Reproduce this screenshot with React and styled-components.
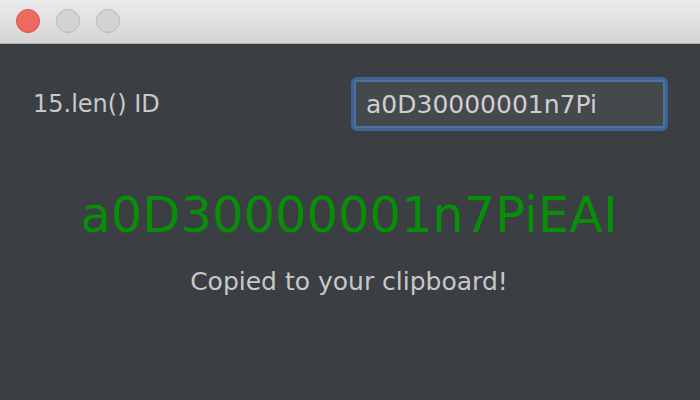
import React from 'react';
import styled, { createGlobalStyle } from 'styled-components';

const GlobalStyle = createGlobalStyle`
  html, body {
    margin: 0;
    padding: 0;
    background: #3b3e42;
  }
  body {
    font-family: "DejaVu Sans", "Liberation Sans", sans-serif;
  }
`;

const Window = styled.div`
  width: 700px;
  height: 400px;
  display: flex;
  flex-direction: column;
  background: #3b3e42;
  overflow: hidden;
`;

const TitleBar = styled.div`
  height: 44px;
  flex-shrink: 0;
  display: flex;
  align-items: center;
  gap: 16px;
  padding: 0 0 1px 16px;
  background: linear-gradient(#ebebeb, #d5d5d5);
  border-bottom: 1px solid #b0b0b0;
  box-sizing: border-box;
`;

const Light = styled.div`
  width: 24px;
  height: 24px;
  border-radius: 50%;
  box-sizing: border-box;
  background: ${(props) => props.color};
  border: 1px solid ${(props) => props.edge};
`;

const Content = styled.div`
  flex: 1;
  display: flex;
  flex-direction: column;
  padding: 36px 35px 0 33px;
`;

const FieldRow = styled.div`
  display: flex;
  align-items: center;
  justify-content: space-between;
`;

const Label = styled.div`
  color: #c9c9c9;
  font-size: 24px;
  line-height: 28px;
`;

const IdInput = styled.input`
  width: 311px;
  height: 48px;
  box-sizing: border-box;
  border: 2px solid #4b72a3;
  border-radius: 3px;
  box-shadow: 0 0 0 3px #3e6493;
  background: #45494c;
  color: #cfcfcf;
  font-family: inherit;
  font-size: 25px;
  padding: 0 0 0 10px;
  outline: none;
`;

const Result = styled.div`
  margin-top: 59px;
  text-align: center;
  color: #088e08;
  font-size: 49.5px;
  line-height: 56px;
  white-space: nowrap;
`;

const Note = styled.div`
  margin-top: 24px;
  text-align: center;
  color: #c8c8c8;
  font-size: 25px;
  line-height: 29px;
`;

export default function App() {
  return (
    <Window>
      <GlobalStyle />
      <TitleBar>
        <Light color="#ee6a5e" edge="#d5554b" />
        <Light color="#d3d3d3" edge="#b9b9b9" />
        <Light color="#d3d3d3" edge="#b9b9b9" />
      </TitleBar>
      <Content>
        <FieldRow>
          <Label>15.len() ID</Label>
          <IdInput defaultValue="a0D30000001n7Pi" />
        </FieldRow>
        <Result>a0D30000001n7PiEAI</Result>
        <Note>Copied to your clipboard!</Note>
      </Content>
    </Window>
  );
}
